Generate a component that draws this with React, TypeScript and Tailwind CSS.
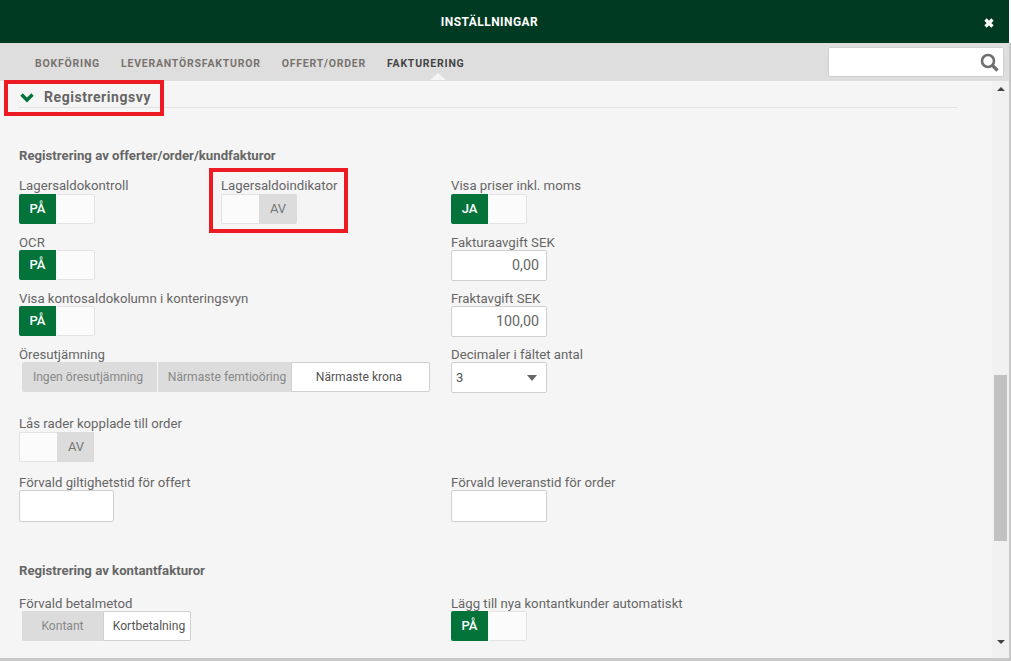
import React from 'react';

const labelCls = "block h-[16px] pt-[1px] text-[13.2px] leading-[16px] text-[#666]";

const Toggle = ({ on, text }: { on: boolean; text: string }) => (
  <div className="flex h-[30px] w-[76px] text-[13px] font-medium">
    {on ? (
      <>
        <div className="flex w-[37px] items-center justify-center rounded-l-[2px] bg-[#03733a] text-white">{text}</div>
        <div className="ml-[1px] w-[38px] rounded-r-[2px] border border-l-0 border-[#e3e3e3] bg-[#fbfbfb]"></div>
      </>
    ) : (
      <>
        <div className="w-[38px] rounded-l-[2px] border border-r-0 border-[#e3e3e3] bg-[#fbfbfb]"></div>
        <div className="flex w-[38px] items-center justify-center rounded-r-[2px] bg-[#dcdcdc] font-normal text-[#777]">{text}</div>
      </>
    )}
  </div>
);

const Field = ({ label, className, children }: { label: string; className?: string; children: React.ReactNode }) => (
  <div className={className}>
    <span className={labelCls}>{label}</span>
    {children}
  </div>
);

const NumInput = ({ value }: { value?: string }) => (
  <div className="flex h-[31px] w-[96px] items-center justify-end rounded-[2px] border border-[#d0d0d0] bg-white pr-[7px] text-[14.3px] text-[#666]">
    {value}
  </div>
);

// pads: [left, right] padding per item, the labels are not quite centred in the original
const Segment = ({ items, width, pads, active }: { items: string[]; width: number[]; pads: number[][]; active: number }) => (
  <div className="ml-[3px] flex h-[30px] text-[12.1px]">
    {items.map((t, i) => (
      <div
        key={t}
        style={{ width: width[i], paddingLeft: pads[i][0], paddingRight: pads[i][1] }}
        className={
          i === active
            ? "flex items-center justify-center rounded-r-[2px] border border-[#d0d0d0] bg-white text-[#555]"
            : i + 1 === active
              ? "flex items-center justify-center bg-[#dcdcdc] text-[#888]"
              : "flex items-center justify-center rounded-l-[2px] border-r border-[#f5f5f5] bg-[#dcdcdc] text-[#888]"
        }
      >
        <span className="whitespace-nowrap">{t}</span>
      </div>
    ))}
  </div>
);

const tabs = ["Bokföring", "Leverantörsfakturor", "Offert/Order", "Fakturering"];

export default function App() {
  return (
    <div className="relative h-[661px] w-[1011px] overflow-hidden bg-white font-['Roboto',sans-serif]">
      <div className="flex h-[658px] w-[1009px] flex-col bg-[#f5f5f5]">
        {/* Titel */}
        <header className="relative flex h-[43px] shrink-0 items-center justify-center bg-[#003a22] pr-[30px]">
          <span className="text-[12px] font-bold uppercase tracking-[0.45px] text-white">Inställningar</span>
          <svg className="absolute left-[983px] top-[17px]" width="12" height="12" viewBox="0 0 12 12">
            <path d="M2.5 2.5 L9.5 9.5 M9.5 2.5 L2.5 9.5" stroke="#fff" strokeWidth="3.2" />
          </svg>
        </header>

        {/* Flikar */}
        <nav className="flex h-[38px] shrink-0 items-center bg-[#dedede] pl-[35px] pr-[5px]">
          <div className="flex flex-1 gap-[21px] pt-[3px]">
            {tabs.map((t, i) => (
              <span
                key={t}
                className={
                  "relative text-[10.5px] font-bold uppercase tracking-[0.78px] " +
                  (i === 3 ? "text-[#444]" : "text-[#77726e]")
                }
              >
                {t}
                {i === 3 && (
                  <span className="absolute left-[43px] top-[17px] h-0 w-0 border-x-[8px] border-b-[7px] border-x-transparent border-b-[#f5f5f5]"></span>
                )}
              </span>
            ))}
          </div>
          <div className="flex h-[30px] w-[176px] items-center justify-end rounded-[2px] border border-[#cfcfcf] bg-white pr-[4px]">
            <svg width="19" height="19" viewBox="0 0 19 19" fill="none" stroke="#6e6e6e">
              <circle cx="8" cy="8" r="6" strokeWidth="2.6" />
              <path d="M12.5 12.5 L17.5 17.5" strokeWidth="3.2" />
            </svg>
          </div>
        </nav>

        <div className="flex min-h-0 flex-1">
          {/* Innehåll */}
          <main className="min-w-0 flex-1 pl-[19px] pr-[35px]">
            <div className="flex h-[27px] items-center border-b border-[#e3e3e3] pt-[7px]">
              <svg className="ml-[1px]" width="14" height="10" viewBox="0 0 14 10" fill="none">
                <path d="M1.5 1.5 L7 7 L12.5 1.5" stroke="#03733a" strokeWidth="3.4" />
              </svg>
              <h2 className="ml-[10px] text-[14px] font-bold tracking-[0.55px] text-[#666]">Registreringsvy</h2>
            </div>

            <h3 className="mt-[39px] h-[17px] text-[13.2px] font-bold leading-[17px] text-[#666]">
              Registrering av offerter/order/kundfakturor
            </h3>

            <div className="mt-[13px] flex">
              <div className="w-[432px]">
                <div className="flex">
                  <Field label="Lagersaldokontroll" className="w-[202px]">
                    <div className="mt-[1px]">
                      <Toggle on text="PÅ" />
                    </div>
                  </Field>
                  <Field label="Lagersaldoindikator">
                    <div className="mt-[1px]">
                      <Toggle on={false} text="AV" />
                    </div>
                  </Field>
                </div>
                <Field label="OCR" className="mt-[10px]">
                  <Toggle on text="PÅ" />
                </Field>
                <Field label="Visa kontosaldokolumn i konteringsvyn" className="mt-[10px]">
                  <Toggle on text="PÅ" />
                </Field>
                <Field label="Öresutjämning" className="mt-[10px]">
                  <Segment
                    items={["Ingen öresutjämning", "Närmaste femtioöring", "Närmaste krona"]}
                    width={[136, 133, 139]}
                    pads={[[0, 3], [5, 0], [0, 3]]}
                    active={2}
                  />
                </Field>
                <Field label="Lås rader kopplade till order" className="mt-[23px]">
                  <div className="mt-[1px] w-[75px] overflow-hidden">
                    <Toggle on={false} text="AV" />
                  </div>
                </Field>
                <Field label="Förvald giltighetstid för offert" className="mt-[12px]">
                  <div className="h-[32px] w-[95px] rounded-[2px] border border-[#d0d0d0] bg-white"></div>
                </Field>
              </div>

              <div>
                <Field label="Visa priser inkl. moms">
                  <div className="mt-[1px]">
                    <Toggle on text="JA" />
                  </div>
                </Field>
                <Field label="Fakturaavgift SEK" className="mt-[10px]">
                  <NumInput value="0,00" />
                </Field>
                <Field label="Fraktavgift SEK" className="mt-[9px]">
                  <NumInput value="100,00" />
                </Field>
                <Field label="Decimaler i fältet antal" className="mt-[9px]">
                  <div className="flex h-[31px] w-[96px] items-center justify-between rounded-[2px] border border-[#d0d0d0] bg-white pl-[4px] pr-[9px] text-[13px] text-[#555]">
                    3
                    <span className="h-0 w-0 border-x-[5.5px] border-t-[6px] border-x-transparent border-t-[#666]"></span>
                  </div>
                </Field>
                <Field label="Förvald leveranstid för order" className="mt-[81px]">
                  <div className="h-[32px] w-[96px] rounded-[2px] border border-[#d0d0d0] bg-white"></div>
                </Field>
              </div>
            </div>

            <h3 className="mt-[40px] h-[17px] text-[13.2px] font-bold leading-[17px] text-[#666]">
              Registrering av kontantfakturor
            </h3>

            <div className="mt-[16px] flex">
              <Field label="Förvald betalmetod" className="w-[432px]">
                <Segment items={["Kontant", "Kortbetalning"]} width={[81, 88]} pads={[[0, 0], [4, 0]]} active={1} />
              </Field>
              <Field label="Lägg till nya kontantkunder automatiskt">
                <Toggle on text="PÅ" />
              </Field>
            </div>
          </main>

          {/* Rullningslist */}
          <div className="flex w-[17px] shrink-0 flex-col items-center bg-[#f1f1f1] pt-[6px]">
            <span className="h-0 w-0 border-x-[4px] border-b-[4px] border-x-transparent border-b-[#444]"></span>
            <div className="mt-[284px] h-[166px] w-[13px] bg-[#c1c1c1]"></div>
            <span className="mt-[99px] h-0 w-0 border-x-[4px] border-t-[4px] border-x-transparent border-t-[#444]"></span>
          </div>
        </div>
      </div>

      {/* Ramar */}
      <div className="absolute right-0 top-[43px] h-full w-[2px] bg-[#c8c8c8]"></div>
      <div className="absolute bottom-0 left-0 h-[3px] w-full bg-[#c8c8c8]"></div>

      {/* Röda markeringar */}
      <div className="absolute left-[4px] top-[80px] h-[36px] w-[160px] border-4 border-[#ed1c24]"></div>
      <div className="absolute left-[209px] top-[168px] h-[65px] w-[139px] border-4 border-[#ed1c24]"></div>
    </div>
  );
}
